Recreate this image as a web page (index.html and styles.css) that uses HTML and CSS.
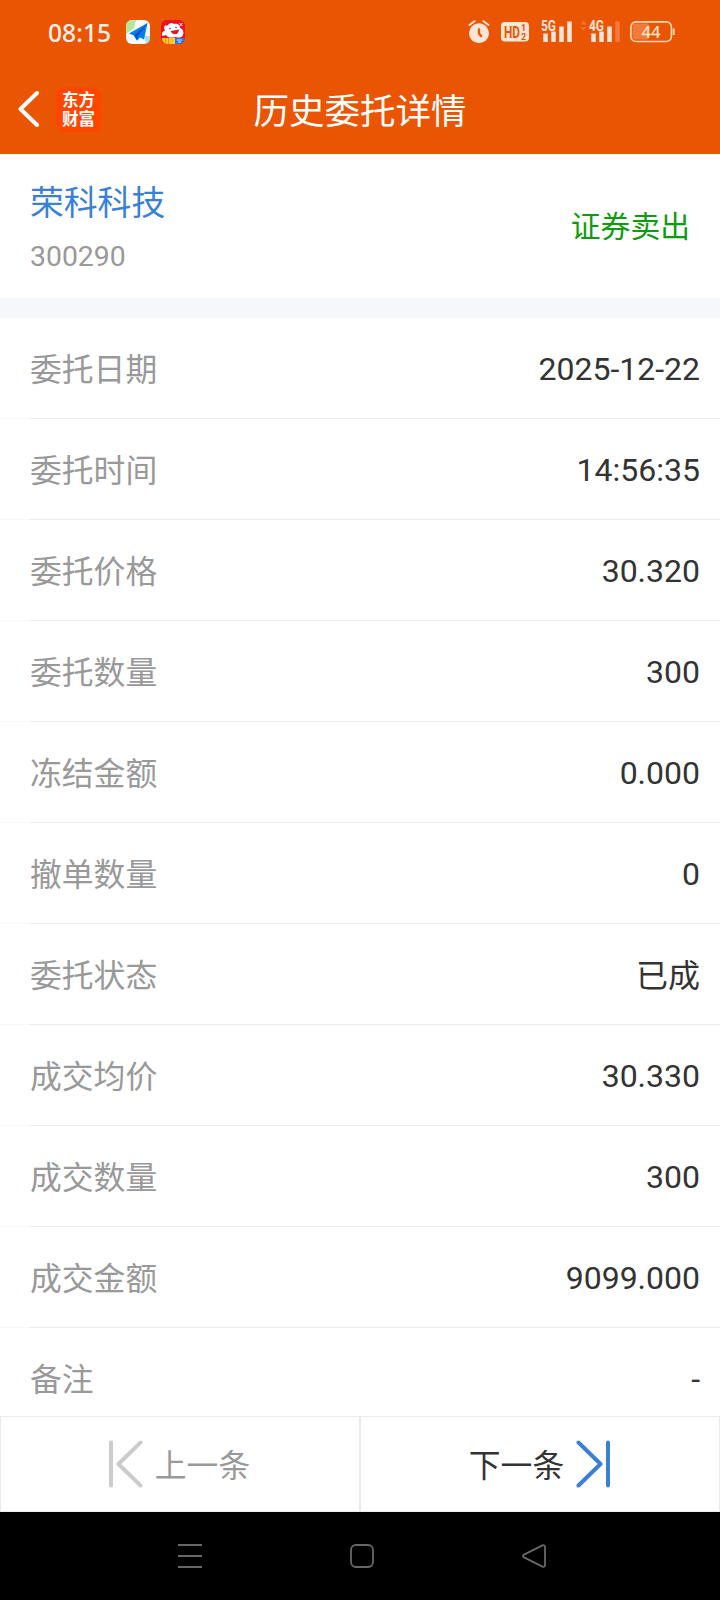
FILE: index.html
```html
<!DOCTYPE html>
<html lang="zh-CN">
<head>
<meta charset="utf-8">
<title>历史委托详情</title>
<link rel="stylesheet" href="styles.css">
</head>
<body>
<div class="screen">
  <header class="header">
    <div class="status">
      <span class="clock">08:15</span>
      <svg class="app-icon" width="24" height="24" viewBox="0 0 24 24">
        <rect width="24" height="24" rx="6" fill="#f4fbfa"/>
        <path d="M0 14V6a6 6 0 0 1 6-6h4L8 8Z" fill="#b5e89a"/>
        <path d="M18 16h6v2a6 6 0 0 1-4 5.600Z" fill="#9be3f8"/>
        <path d="M21.500 3 3 13.500l5 2 3 5 3-3 4 2Z" fill="#0a7cf2"/>
        <path d="M21.500 3 8 15.500l3 5 1-4Z" fill="#0756c4"/>
      </svg>
      <svg class="app-icon app-icon-second" width="24" height="24" viewBox="0 0 24 24">
        <rect width="24" height="24" rx="6" fill="#ef1020"/>
        <path d="M1 18h14v6H6a6 6 0 0 1-5-5Z" fill="#ffc928"/>
        <path d="M4.500 18v6M7.500 18v6" stroke="#f08a18"/>
        <path d="M1.500 16C0 13 2 11 4 11 2 7 4 4 6 6c2-3 5-4 7-2 4-1 6 1 6 4 3 1 4 4 3 7-1 3-5 3-7 2-5 1-8 1-10-2Z" fill="#fff"/>
        <path d="m9.500 11 8.500-1.500c0 6-6.500 6-8.500 1.500Z" fill="#d71f2c"/>
        <circle cx="9" cy="8.500" r=".8" fill="#333"/><circle cx="15" cy="7.500" r=".8" fill="#333"/>
        <path d="m18.500 3 3 3m0-3-3 3" stroke="#fff"/>
        <path d="M14 18h10a6 6 0 0 1-6 6h-4Z" fill="#2878e8"/>
        <path d="M16 20h5M17 22h3" stroke="#d8eaff"/>
      </svg>
      <svg class="alarm" width="22" height="24" viewBox="0 0 22 24">
        <circle cx="11" cy="13.300" r="10" fill="#ffe5d6"/>
        <path d="m1.500 5 5-3.800M20.500 5l-5-3.800" stroke="#ffe5d6" stroke-width="2" stroke-linecap="round"/>
        <path d="M11 9.500v4l2 2.500" fill="none" stroke="#e95504" stroke-width="2.400" stroke-linecap="round"/>
      </svg>
      <svg class="hd" width="28" height="20" viewBox="0 0 28 20">
        <rect width="28" height="19.500" rx="4" fill="#ffe5d6"/>
        <text x="3" y="15.500" class="hd-text" textLength="16" lengthAdjust="spacingAndGlyphs">HD</text>
        <text x="20" y="9" class="hd-num">1</text>
        <text x="20" y="17.500" class="hd-num">2</text>
      </svg>
      <svg class="signal" width="32" height="32" viewBox="0 -4 32 32">
        <text x="0" y="10.500" class="net" textLength="15" lengthAdjust="spacingAndGlyphs">5G</text>
        <path d="M4.500 13.500V22M12.500 11.500V22M20.500 6.500V22M28.500 1.500V22" class="bars"/>
      </svg>
      <svg class="signal signal-second" width="41" height="32" viewBox="0 -4 41 32">
        <path d="m.5 4.500 3-4 3 4Zm0 2.500h6l-3 4Z" fill="#f17030"/>
        <text x="9" y="10.500" class="net" textLength="15" lengthAdjust="spacingAndGlyphs">4G</text>
        <path d="M13.500 13.500V22M21.500 11.500V22M29.500 6.500V22" class="bars"/>
        <path d="M37.500 1.500V22" class="bars bars-off"/>
      </svg>
      <svg class="battery" width="45" height="22" viewBox="0 0 45 22">
        <rect x="2.500" y="2.500" width="17" height="16" rx="3" fill="#f17a3b"/>
        <rect x=".9" y=".9" width="40.500" height="19.600" rx="5" fill="none" stroke="#ffd9b0" stroke-width="1.600"/>
        <path d="M43.700 7.500v6.500" stroke="#ffd9b0" stroke-width="2"/>
        <text x="11.500" y="16.700" class="battery-text" textLength="19" lengthAdjust="spacingAndGlyphs">44</text>
      </svg>
    </div>
    <div class="nav">
      <div class="nav-left">
        <svg class="back" width="24" height="38" viewBox="0 0 24 38">
          <path d="M19 3 2.500 19 19 35" fill="none" stroke="#fff" stroke-width="4" stroke-linecap="round" stroke-linejoin="round"/>
        </svg>
        <div class="brand"><span>东方</span><span>财富</span></div>
      </div>
      <h1 class="title">历史委托详情</h1>
    </div>
  </header>

  <section class="summary">
    <div class="stock">
      <div class="stock-name">荣科科技</div>
      <div class="stock-code">300290</div>
    </div>
    <div class="side">证券卖出</div>
  </section>

  <main class="details">
    <div class="row"><span class="label">委托日期</span><span class="value">2025-12-22</span></div>
    <div class="row"><span class="label">委托时间</span><span class="value">14:56:35</span></div>
    <div class="row"><span class="label">委托价格</span><span class="value">30.320</span></div>
    <div class="row"><span class="label">委托数量</span><span class="value">300</span></div>
    <div class="row"><span class="label">冻结金额</span><span class="value">0.000</span></div>
    <div class="row"><span class="label">撤单数量</span><span class="value">0</span></div>
    <div class="row"><span class="label">委托状态</span><span class="value value-text">已成</span></div>
    <div class="row"><span class="label">成交均价</span><span class="value">30.330</span></div>
    <div class="row"><span class="label">成交数量</span><span class="value">300</span></div>
    <div class="row"><span class="label">成交金额</span><span class="value">9099.000</span></div>
    <div class="row"><span class="label">备注</span><span class="value">-</span></div>
  </main>

  <footer class="pager">
    <div class="page prev">
      <svg width="34" height="48" viewBox="0 0 34 48">
        <path d="M2 2.500v43M31.500 2.500 9.500 24l22 21.500" class="pager-icon"/>
      </svg>
      <span>上一条</span>
    </div>
    <div class="page next">
      <span>下一条</span>
      <svg width="34" height="48" viewBox="0 0 34 48">
        <path d="M32 2.500v43M2.500 2.500l22 21.500-22 21.500" class="pager-icon"/>
      </svg>
    </div>
  </footer>

  <div class="system-nav">
    <svg width="24" height="26" viewBox="0 0 24 26"><path d="M0 2h24M0 13h24M0 24h24"/></svg>
    <svg width="26" height="26" viewBox="0 0 26 26"><rect x="2" y="2" width="22" height="22" rx="5"/></svg>
    <svg width="25" height="26" viewBox="0 0 25 26"><path d="M20.500 2.400 2 11.600q-2 1.400 0 2.800l18.500 9.200q2.500.8 2.500-1.600V4q0-2.400-2.500-1.600Z"/></svg>
  </div>
</div>
</body>
</html>
```
FILE: styles.css
```css
* {
  box-sizing: border-box;
}

body {
  margin: 0;
  background: #fff;
  font-family: Roboto, "Noto Sans CJK SC", sans-serif;
}

.screen {
  display: flex;
  flex-direction: column;
  width: 720px;
  height: 1600px;
  overflow: hidden;
}

.header {
  flex: none;
  height: 154px;
  background: #ea5504;
  color: #fff;
}

.status {
  display: flex;
  align-items: center;
  height: 64px;
  padding: 0 45px 0 48px;
}

.clock {
  width: 78px;
  padding-top: 1px;
  color: #fff0e5;
  font: 500 24.7px/30px "Noto Sans", sans-serif;
}

.app-icon-second {
  margin-left: 11px;
}

.alarm {
  margin-left: auto;
}

.hd {
  margin-left: 11px;
}

.signal {
  margin-left: 12px;
}

.signal-second {
  margin-left: 7px;
}

.battery {
  margin-left: 9px;
}

.hd-text {
  fill: #e95504;
  font: 700 16px Roboto, sans-serif;
}

.hd-num {
  fill: #e95504;
  font: 700 9px Roboto, sans-serif;
}

.net {
  fill: #ffe5d6;
  font: 700 14px Roboto, sans-serif;
}

.bars {
  stroke: #ffe5d6;
  stroke-width: 4.5;
}

.bars-off {
  stroke: #f47a3c;
}

.battery-text {
  fill: #ffe5c8;
  font: 500 16px "Noto Sans", sans-serif;
}

.nav {
  display: grid;
  grid-template-columns: 1fr 216px 1fr;
  align-items: center;
  height: 90px;
  padding: 0 18px;
}

.nav-left {
  display: flex;
  align-items: center;
  gap: 14px;
}

.brand {
  display: flex;
  flex-direction: column;
  align-items: center;
  justify-content: center;
  width: 45px;
  height: 45px;
  border-radius: 9px;
  background: #ff4500;
  font: 700 16.5px/19px "Noto Sans CJK SC", sans-serif;
}

.title {
  margin: 0;
  padding-top: 5px;
  font-size: 35.5px;
  font-weight: 400;
  line-height: 44px;
  text-align: center;
  white-space: nowrap;
}

.summary {
  display: flex;
  flex: none;
  align-items: center;
  justify-content: space-between;
  height: 164px;
  padding: 0 30px;
  border-bottom: 20px solid #f6f7fa;
}

.stock {
  padding-top: 9px;
}

.stock-name {
  color: #3a80d7;
  font-size: 33.8px;
  line-height: 52px;
}

.stock-code {
  color: #999;
  font-size: 28.4px;
  line-height: 54px;
}

.side {
  padding-bottom: 4px;
  color: #0d9c0d;
  font-size: 29.8px;
}

.details {
  flex: none;
  height: 1098px;
  overflow: hidden;
}

.row {
  display: flex;
  align-items: center;
  justify-content: space-between;
  height: 101px;
  padding: 0 20px 0 30px;
  background: linear-gradient(90deg, #f9f9f9 30px, #ececec 30px) bottom / 100% 1px no-repeat;
  font-size: 32px;
}

.label {
  padding-bottom: 4px;
  color: #999;
  font-size: 31.8px;
}

.value {
  color: #333;
}

.value-text {
  padding-bottom: 4px;
}

.pager {
  display: flex;
  flex: none;
  height: 96px;
  border: 1px solid #ebebeb;
}

.page {
  display: flex;
  flex: 1;
  align-items: center;
  justify-content: center;
  gap: 12px;
  padding-bottom: 1px;
  font-size: 31.8px;
}

.page span {
  padding-bottom: 2px;
}

.prev {
  border-right: 1px solid #ebebeb;
  color: #999;
}

.next {
  border-left: 1px solid #ebebeb;
  color: #333;
}

.prev,
.next {
  padding-right: 1px;
}

.pager-icon {
  fill: none;
  stroke: #ccc;
  stroke-width: 4;
  stroke-linecap: round;
  stroke-linejoin: round;
}

.next .pager-icon {
  stroke: #3a80d7;
}

.system-nav {
  display: flex;
  flex: none;
  justify-content: space-between;
  align-items: center;
  height: 88px;
  padding: 0 173px 0 178px;
  background: #000;
}

.system-nav svg {
  fill: none;
  stroke: #686868;
  stroke-width: 1.8;
}
```
